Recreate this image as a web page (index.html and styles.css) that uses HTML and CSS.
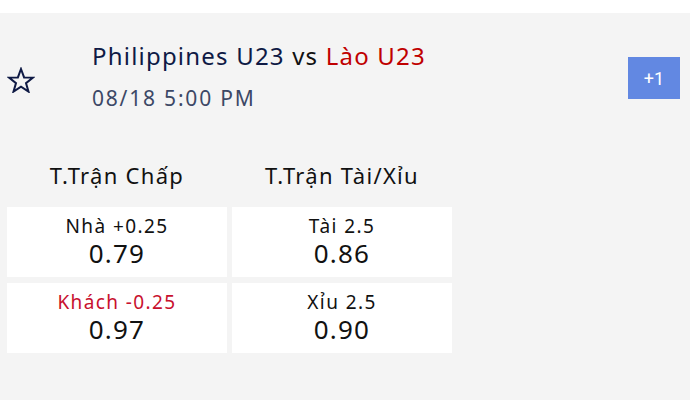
FILE: index.html
```
<!DOCTYPE html>
<html lang="vi">
<head>
<meta charset="utf-8">
<link rel="stylesheet" href="styles.css">
</head>
<body>
<div class="panel">
  <div class="match">
    <div class="fav">
      <svg width="28" height="26" viewBox="0 0 28 26"><path d="M14 2 L17.1 10.4 L26 10.6 L19 16.1 L21.5 24.6 L14 19.6 L6.5 24.6 L9 16.1 L2 10.6 L10.9 10.4 Z" fill="none" stroke="#0f1a45" stroke-width="2" stroke-linejoin="miter"/></svg>
    </div>
    <div class="info">
      <div class="teams"><span class="home">Philippines U23</span> <span class="vs">vs</span> <span class="away">Lào U23</span></div>
      <div class="time">08/18 5:00 PM</div>
    </div>
    <div class="more">+1</div>
  </div>
  <div class="markets">
    <div class="col">
      <div class="head">T.Trận Chấp</div>
      <div class="cell"><div class="lbl">Nhà +0.25</div><div class="odd">0.79</div></div>
      <div class="cell"><div class="lbl red">Khách -0.25</div><div class="odd">0.97</div></div>
    </div>
    <div class="col">
      <div class="head">T.Trận Tài/Xỉu</div>
      <div class="cell"><div class="lbl">Tài 2.5</div><div class="odd">0.86</div></div>
      <div class="cell"><div class="lbl">Xỉu 2.5</div><div class="odd">0.90</div></div>
    </div>
  </div>
</div>
</body>
</html>
```
FILE: styles.css
```
html, body { margin: 0; padding: 0; background: #fff; }
body { font-family: "Noto Sans", "Open Sans", sans-serif; width: 690px; height: 400px; overflow: hidden; }
.panel { margin-top: 13px; background: #f4f4f4; height: 387px; }
.match { display: flex; align-items: flex-start; height: 147px; }
.fav { width: 92px; padding-top: 54px; padding-left: 7px; box-sizing: border-box; }
.fav svg { display: block; }
.info { flex: 1; padding-top: 27px; }
.teams { font-size: 24px; letter-spacing: 1.2px; color: #0f1a45; line-height: 32px; white-space: nowrap; }
.vs { color: #111; }
.away { color: #c00000; }
.time { font-size: 21px; letter-spacing: 1.8px; color: #3c4866; margin-top: 13px; line-height: 26px; }
.more { margin-top: 44px; margin-right: 10px; width: 52px; height: 42px; background: #6288e2; color: #fff; font-family: Roboto, sans-serif; font-size: 18px; display: flex; align-items: center; justify-content: center; }
.markets { display: grid; grid-template-columns: 220px 220px; column-gap: 5px; padding-left: 7px; }
.col { display: flex; flex-direction: column; gap: 6px; }
.head { text-align: center; font-size: 22px; letter-spacing: 1.3px; color: #111; height: 41px; line-height: 30px; }
.cell { background: #fff; height: 70px; box-sizing: border-box; padding-top: 7px; display: flex; flex-direction: column; align-items: center; color: #111; }
.lbl { font-size: 19px; letter-spacing: 1.4px; line-height: 24px; }
.lbl.red { color: #c8102e; }
.odd { font-size: 26px; letter-spacing: 1.2px; line-height: 30px; }
```
